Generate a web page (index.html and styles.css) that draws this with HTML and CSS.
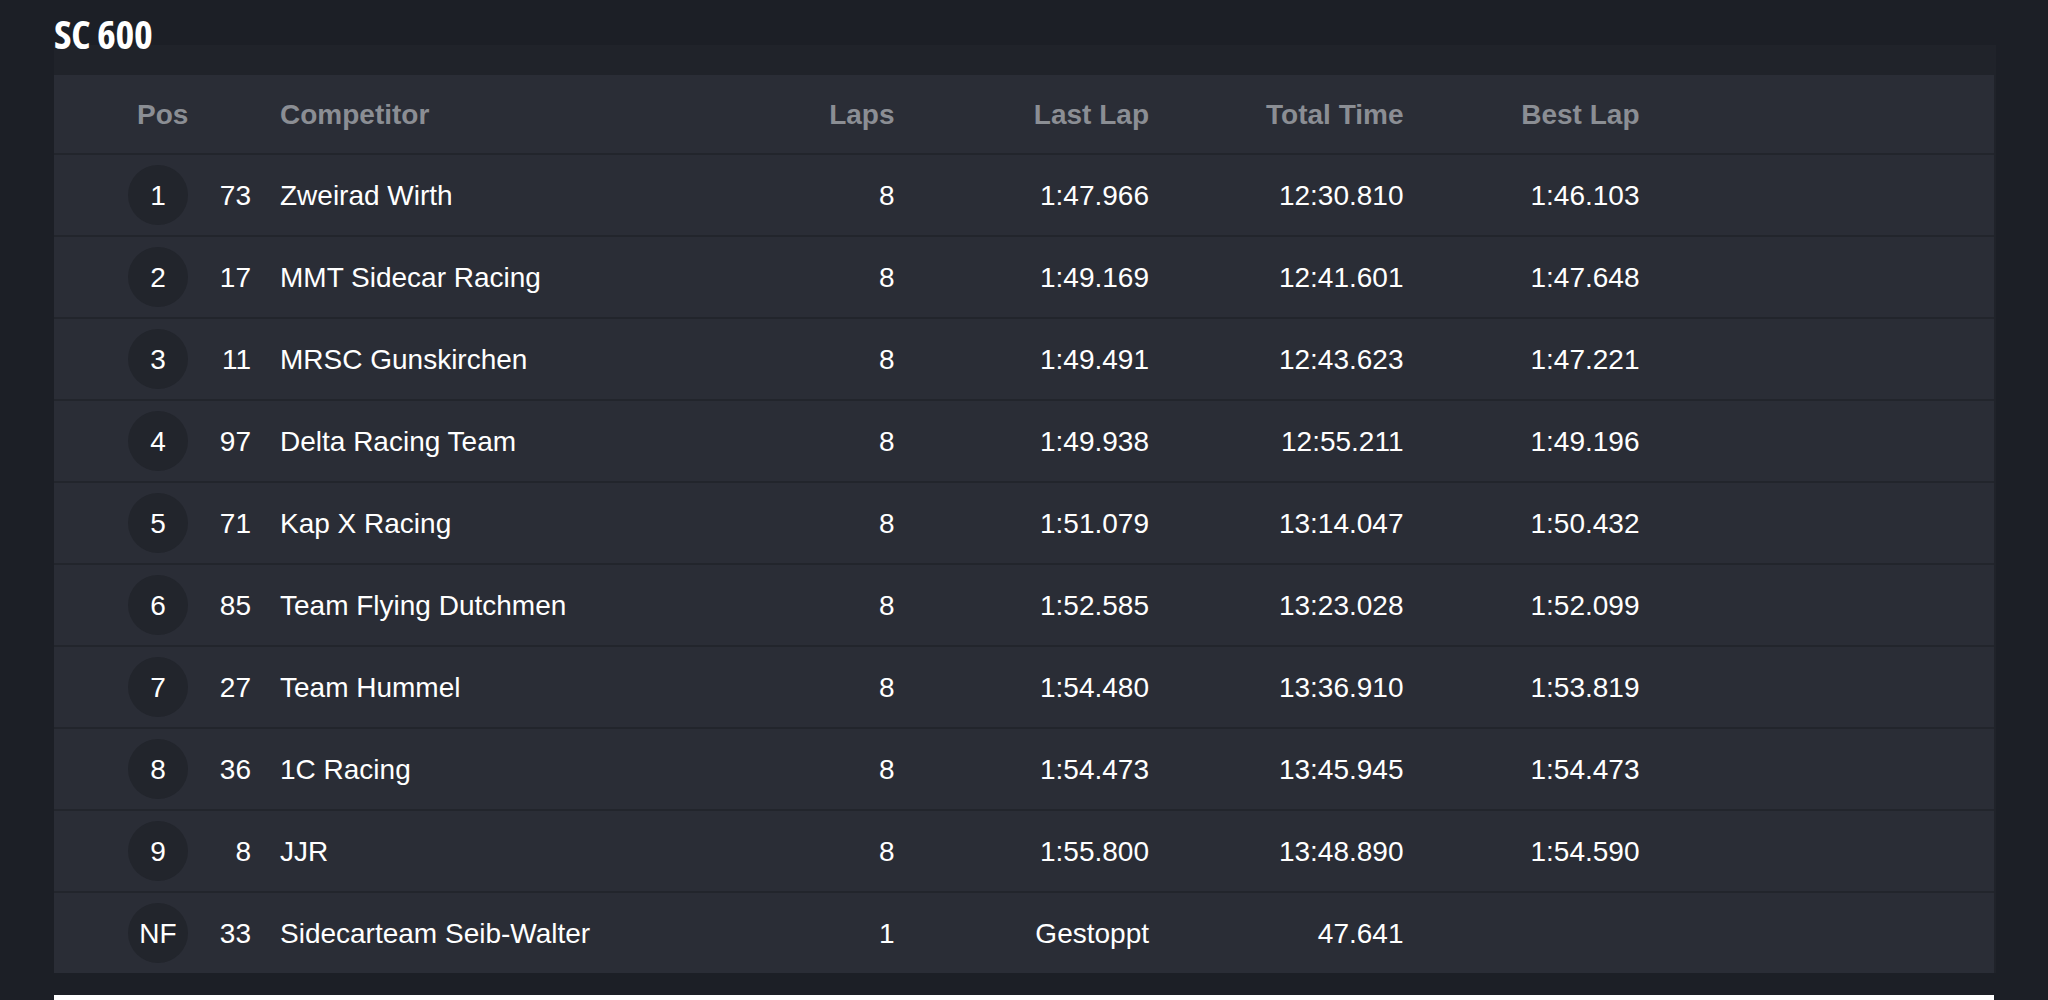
FILE: index.html
```html
<!DOCTYPE html>
<html>
<head>
<meta charset="utf-8">
<link rel="stylesheet" href="styles.css">
</head>
<body>
<div class="page">
  <h1 class="title">SC 600</h1>
  <section class="panel">
    <div class="table">
      <div class="row head">
        <div class="c pos-h">Pos</div>
        <div class="c num"></div>
        <div class="c name">Competitor</div>
        <div class="c r">Laps</div>
        <div class="c r">Last Lap</div>
        <div class="c r">Total Time</div>
        <div class="c r">Best Lap</div>
        <div class="c"></div>
      </div>
      <div class="row"><div class="c pos"><span class="badge">1</span></div><div class="c num">73</div><div class="c name">Zweirad Wirth</div><div class="c r">8</div><div class="c r">1:47.966</div><div class="c r">12:30.810</div><div class="c r">1:46.103</div><div class="c"></div></div>
      <div class="row"><div class="c pos"><span class="badge">2</span></div><div class="c num">17</div><div class="c name">MMT Sidecar Racing</div><div class="c r">8</div><div class="c r">1:49.169</div><div class="c r">12:41.601</div><div class="c r">1:47.648</div><div class="c"></div></div>
      <div class="row"><div class="c pos"><span class="badge">3</span></div><div class="c num">11</div><div class="c name">MRSC Gunskirchen</div><div class="c r">8</div><div class="c r">1:49.491</div><div class="c r">12:43.623</div><div class="c r">1:47.221</div><div class="c"></div></div>
      <div class="row"><div class="c pos"><span class="badge">4</span></div><div class="c num">97</div><div class="c name">Delta Racing Team</div><div class="c r">8</div><div class="c r">1:49.938</div><div class="c r">12:55.211</div><div class="c r">1:49.196</div><div class="c"></div></div>
      <div class="row"><div class="c pos"><span class="badge">5</span></div><div class="c num">71</div><div class="c name">Kap X Racing</div><div class="c r">8</div><div class="c r">1:51.079</div><div class="c r">13:14.047</div><div class="c r">1:50.432</div><div class="c"></div></div>
      <div class="row"><div class="c pos"><span class="badge">6</span></div><div class="c num">85</div><div class="c name">Team Flying Dutchmen</div><div class="c r">8</div><div class="c r">1:52.585</div><div class="c r">13:23.028</div><div class="c r">1:52.099</div><div class="c"></div></div>
      <div class="row"><div class="c pos"><span class="badge">7</span></div><div class="c num">27</div><div class="c name">Team Hummel</div><div class="c r">8</div><div class="c r">1:54.480</div><div class="c r">13:36.910</div><div class="c r">1:53.819</div><div class="c"></div></div>
      <div class="row"><div class="c pos"><span class="badge">8</span></div><div class="c num">36</div><div class="c name">1C Racing</div><div class="c r">8</div><div class="c r">1:54.473</div><div class="c r">13:45.945</div><div class="c r">1:54.473</div><div class="c"></div></div>
      <div class="row"><div class="c pos"><span class="badge">9</span></div><div class="c num">8</div><div class="c name">JJR</div><div class="c r">8</div><div class="c r">1:55.800</div><div class="c r">13:48.890</div><div class="c r">1:54.590</div><div class="c"></div></div>
      <div class="row"><div class="c pos"><span class="badge">NF</span></div><div class="c num">33</div><div class="c name">Sidecarteam Seib-Walter</div><div class="c r">1</div><div class="c r">Gestoppt</div><div class="c r">47.641</div><div class="c r"></div><div class="c"></div></div>
    </div>
  </section>
  <div class="next-card"></div>
</div>
</body>
</html>
```

FILE: styles.css
```css
html, body {
  margin: 0;
  padding: 0;
  background: #1c1f26;
  overflow: hidden;
}
body {
  font-family: "Liberation Sans", Arial, Helvetica, sans-serif;
  color: #ffffff;
}
.page {
  padding: 0 52px 0 54px;
}
.title {
  margin: 0 0 -9px 0;
  padding-top: 14px;
  font-family: "Open Sans", "Liberation Sans Narrow", sans-serif;
  font-stretch: 75%;
  font-weight: 700;
  font-size: 40px;
  line-height: 40px;
  letter-spacing: -0.3px;
  position: relative;
  z-index: 1;
  color: #ffffff;
}
.panel {
  background: #20232a;
  padding: 30px 2px 0 0;
}
.table {
  background: #2a2d36;
}
.row {
  box-sizing: border-box;
  display: grid;
  grid-template-columns: 162px 49px 420px 224.5px 254.5px 254.5px 236px 1fr;
  align-items: center;
  height: 82px;
  padding-top: 2px;
  border-top: 2px solid #22252c;
  font-size: 28px;
}
.row.head {
  height: 78px;
  padding-top: 2px;
  border-top: none;
  font-weight: 700;
  color: #8b8e94;
}
.c {
  padding: 0 15px;
  white-space: nowrap;
}
.r {
  text-align: right;
}
.num {
  text-align: right;
  padding: 0 14px 0 0;
}
.pos-h {
  padding: 0 0 0 83px;
}
.pos {
  padding: 0 0 0 74px;
}
.badge {
  box-sizing: border-box;
  display: flex;
  align-items: center;
  justify-content: center;
  width: 60px;
  height: 60px;
  margin-top: -2px;
  padding-top: 2px;
  border-radius: 50%;
  background: #22252c;
}
.next-card {
  margin: 22px 2px 0 0;
  height: 40px;
  background: #ffffff;
}
```
